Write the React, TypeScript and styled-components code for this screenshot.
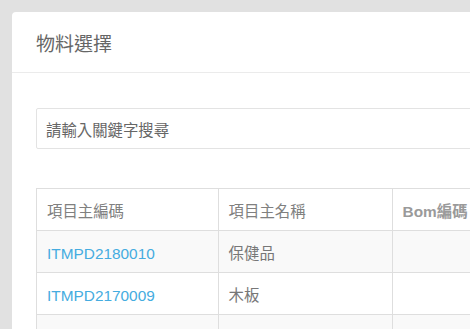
import React from "react";
import styled, { createGlobalStyle } from "styled-components";

const Global = createGlobalStyle`
  html, body { margin: 0; padding: 0; background: #e1e1e1; overflow: hidden; }
  body { font-family: "Liberation Sans", "Noto Sans CJK TC", sans-serif; }
`;

const Page = styled.div`
  padding: 12px 0 0 12px;
  width: 470px;
  height: 329px;
  box-sizing: border-box;
  overflow: hidden;
`;

const Card = styled.div`
  background: #fff;
  border-radius: 4px 0 0 0;
  width: 520px;
  height: 400px;
`;

const Header = styled.div`
  height: 60px;
  border-bottom: 1px solid #ebebeb;
  display: flex;
  align-items: center;
  padding-left: 24px;
  font-family: "Noto Sans CJK TC", sans-serif;
  font-size: 19px;
  color: #666;
`;

const Body = styled.div`
  padding: 35px 0 0 24px;
`;

const Search = styled.input`
  box-sizing: border-box;
  width: 500px;
  height: 41px;
  border: 1px solid #e3e3e3;
  border-radius: 2px;
  padding: 0 9px;
  font-family: "Noto Sans CJK TC", sans-serif;
  font-size: 15.4px;
  color: #666;
  outline: none;
  &::placeholder { color: #666; }
`;

const Table = styled.table`
  margin-top: 39px;
  border-collapse: collapse;
  font-size: 15.4px;
`;

const Th = styled.th<{ $w: number; $latin?: boolean }>`
  width: ${(p) => p.$w}px;
  height: 42px;
  box-sizing: border-box;
  border: 1px solid #dedede;
  text-align: left;
  padding: 0 10px;
  font-weight: ${(p) => (p.$latin ? 700 : 400)};
  color: ${(p) => (p.$latin ? "#9a9a9a" : "#808080")};
  font-family: ${(p) => (p.$latin ? '"Liberation Sans", "Noto Sans CJK TC", sans-serif' : '"Noto Sans CJK TC", sans-serif')};
`;

const Tr = styled.tr<{ $odd: boolean }>`
  background: ${(p) => (p.$odd ? "#f9f9f9" : "#fff")};
`;

const Td = styled.td`
  height: 42px;
  box-sizing: border-box;
  border: 1px solid #dedede;
  padding: 0 10px;
  color: #777;
  font-family: "Noto Sans CJK TC", sans-serif;
`;

const Link = styled.a`
  color: #45ace0;
  text-decoration: none;
  font-family: "Liberation Sans", sans-serif;
`;

const rows = [
  { code: "ITMPD2180010", name: "保健品" },
  { code: "ITMPD2170009", name: "木板" },
  { code: "ITMPD2170008", name: "木材原料" },
];

export default function App() {
  return (
    <Page>
      <Global />
      <Card>
        <Header>物料選擇</Header>
        <Body>
          <Search placeholder="請輸入關鍵字搜尋" />
          <Table>
            <thead>
              <tr>
                <Th $w={182}>項目主編碼</Th>
                <Th $w={175}>項目主名稱</Th>
                <Th $w={140} $latin>Bom編碼</Th>
              </tr>
            </thead>
            <tbody>
              {rows.map((r, i) => (
                <Tr key={r.code} $odd={i % 2 === 0}>
                  <Td><Link href="#">{r.code}</Link></Td>
                  <Td>{r.name}</Td>
                  <Td></Td>
                </Tr>
              ))}
            </tbody>
          </Table>
        </Body>
      </Card>
    </Page>
  );
}
